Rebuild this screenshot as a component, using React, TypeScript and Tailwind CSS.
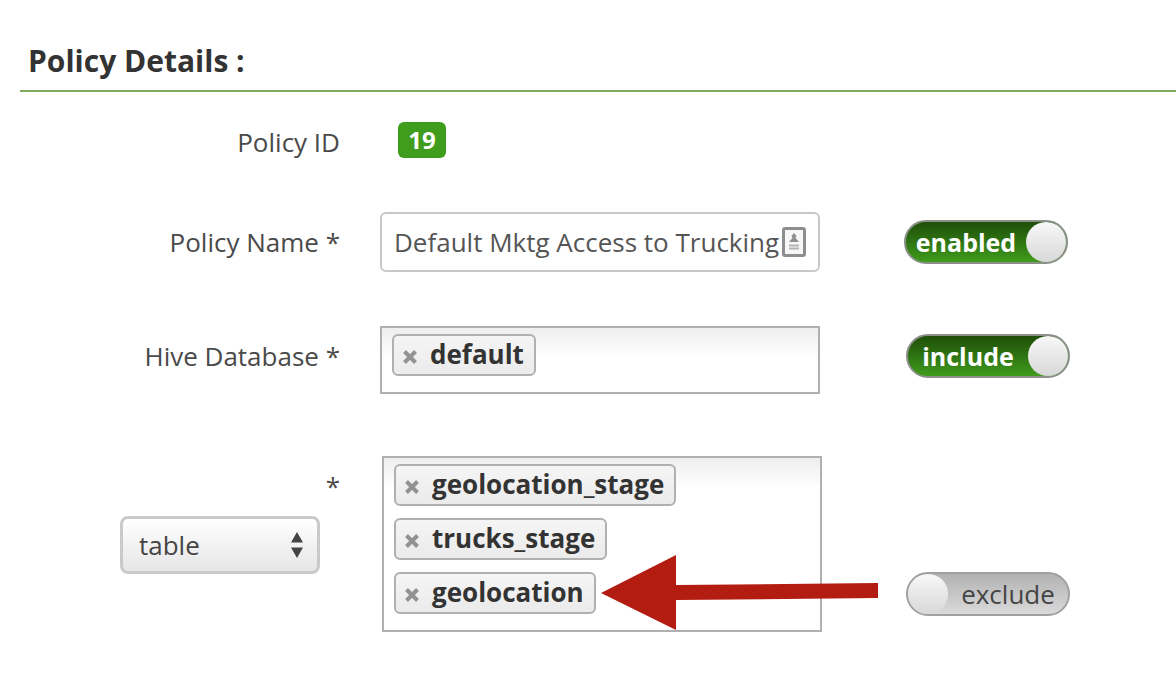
import { useState } from "react";
import type { ReactNode } from "react";

function RemoveIcon() {
  return (
    <svg viewBox="0 0 16 14" className="h-3.5 w-4" aria-hidden="true">
      <path d="M2.5 1.5 L13.5 12.5 M13.5 1.5 L2.5 12.5" stroke="#929292" strokeWidth="4" fill="none" />
    </svg>
  );
}

function Tag({ name, onRemove }: { name: string; onRemove: () => void }) {
  return (
    <li className="flex h-[42px] items-center gap-3 rounded-md border-2 border-[#b0b0b0] bg-linear-to-b from-[#f5f5f5] to-[#ebebeb] pr-2.5 pb-0.5 pl-2">
      <button type="button" aria-label={`Remove ${name}`} onClick={onRemove} className="pt-1.5">
        <RemoveIcon />
      </button>
      <span className="text-[26px] leading-8 font-bold text-[#333]">{name}</span>
    </li>
  );
}

function TagBox({ label, initial }: { label: string; initial: string[] }) {
  const [tags, setTags] = useState(initial);
  return (
    <ul
      aria-label={label}
      className="flex min-h-[68px] w-full flex-col items-start gap-3 border-2 border-[#b0b0b0] bg-white bg-linear-to-b from-[#eeeeee] to-white to-[30px] px-2.5 pt-1.5 pb-4"
    >
      {tags.map((tag) => (
        <Tag key={tag} name={tag} onRemove={() => setTags(tags.filter((t) => t !== tag))} />
      ))}
    </ul>
  );
}

function Toggle({ on, off, initial }: { on: string; off: string; initial: boolean }) {
  const [checked, setChecked] = useState(initial);
  return (
    <label
      className={
        checked
          ? "flex h-11 w-[164px] cursor-pointer items-center rounded-full border-2 border-[#8a8f88] bg-linear-to-b from-[#1f4f0a] to-[#3f9c1c]"
          : "flex h-11 w-[164px] cursor-pointer flex-row-reverse items-center rounded-full border-2 border-[#a0a0a0] bg-linear-to-b from-[#b2b2b2] to-[#dadada]"
      }
    >
      <input type="checkbox" className="sr-only" checked={checked} onChange={(e) => setChecked(e.target.checked)} />
      <span
        className={
          checked
            ? "flex-1 text-center text-[25px] leading-8 font-bold text-white"
            : "flex-1 text-center text-[26px] leading-8 text-[#444]"
        }
      >
        {checked ? on : off}
      </span>
      <span className="size-10 rounded-full bg-linear-to-b from-[#f8f8f8] to-[#d8d8d8]" />
    </label>
  );
}

function ContactCardIcon() {
  return (
    <svg viewBox="0 0 24 30" className="h-[30px] w-6" aria-hidden="true">
      <rect x="1.5" y="1.5" width="21" height="27" rx="1.5" fill="#f7f7f7" stroke="#8e8e8e" strokeWidth="3" />
      <path d="M12 6 L14.5 9 L13.5 11 L17 15 H7 L10.5 11 L9.5 9 Z" fill="#8e8e8e" />
      <path d="M7 18.5 H17 M7 21.5 H17" stroke="#b4b4b4" strokeWidth="2" />
    </svg>
  );
}

function PointerArrow() {
  return (
    <svg viewBox="0 0 277 75" className="absolute top-[99px] left-[219px] h-[75px] w-[277px]" aria-hidden="true">
      <path d="M0 38 L75 0 V30 L277 28 V43 L75 45 V75 Z" fill="#b31c11" />
    </svg>
  );
}

function Row({ label, children }: { label: ReactNode; children: ReactNode }) {
  return (
    <div className="flex items-center gap-10">
      <div className="w-80 shrink-0 text-right">{label}</div>
      {children}
    </div>
  );
}

export default function App() {
  const [name, setName] = useState("Default Mktg Access to Trucking");
  return (
    <main className="min-h-screen overflow-x-hidden bg-white pt-10 pl-5 font-['Open_Sans','Noto_Sans',sans-serif] text-[26px] leading-9 text-[#4a4a4a]">
      <h1 className="border-b-2 border-[#7fab5c] pb-2 pl-2 text-[30px] leading-[42px] font-bold text-[#333]">
        Policy Details :
      </h1>
      <form className="pt-[30px]">
        <div className="flex gap-10">
          <div className="w-80 shrink-0 pt-0.5 text-right">Policy ID</div>
          <span className="ml-[18px] flex h-9 w-12 items-center justify-center rounded-md bg-[#3f9c1c] text-2xl font-bold text-white">
            19
          </span>
        </div>

        <div className="pt-[52px]">
          <Row label={<label htmlFor="policy-name">Policy Name *</label>}>
            <div className="flex h-[60px] w-[440px] items-center rounded-md border-2 border-[#c8c8c8] bg-white px-3">
              <input
                id="policy-name"
                type="text"
                value={name}
                onChange={(e) => setName(e.target.value)}
                className="min-w-0 flex-1 text-[#555] outline-none"
              />
              <ContactCardIcon />
            </div>
            <div className="pl-11">
              <Toggle on="enabled" off="disabled" initial={true} />
            </div>
          </Row>
        </div>

        <div className="pt-[54px]">
          <div className="flex gap-10">
            <div className="w-80 shrink-0 pt-3 text-right">Hive Database *</div>
            <div className="w-[440px]">
              <TagBox label="Hive Database" initial={["default"]} />
            </div>
            <div className="pt-2 pl-[46px]">
              <Toggle on="include" off="exclude" initial={true} />
            </div>
          </div>
        </div>

        <div className="flex gap-[42px] pt-[62px]">
          <div className="flex w-80 shrink-0 flex-col items-end pt-3">
            <span>*</span>
            <div className="mt-3 mr-5 grid w-[200px] items-center">
              <select
                aria-label="Resource type"
                defaultValue="table"
                className="col-start-1 row-start-1 h-[58px] appearance-none rounded-lg border-3 border-[#cacaca] bg-linear-to-b from-white to-[#e6e6e6] px-4 text-[#444]"
              >
                <option value="table">table</option>
                <option value="udf">udf</option>
              </select>
              <svg
                viewBox="0 0 14 26"
                className="pointer-events-none col-start-1 row-start-1 mr-4 h-[26px] w-3.5 justify-self-end"
                aria-hidden="true"
              >
                <path d="M7 0 L13 10.5 H1 Z M1 15.5 H13 L7 26 Z" fill="#444" />
              </svg>
            </div>
          </div>
          <div className="relative w-[440px]">
            <TagBox label="Tables" initial={["geolocation_stage", "trucks_stage", "geolocation"]} />
            <PointerArrow />
          </div>
          <div className="self-end pb-4 pl-[42px]">
            <Toggle on="include" off="exclude" initial={false} />
          </div>
        </div>
      </form>
    </main>
  );
}
